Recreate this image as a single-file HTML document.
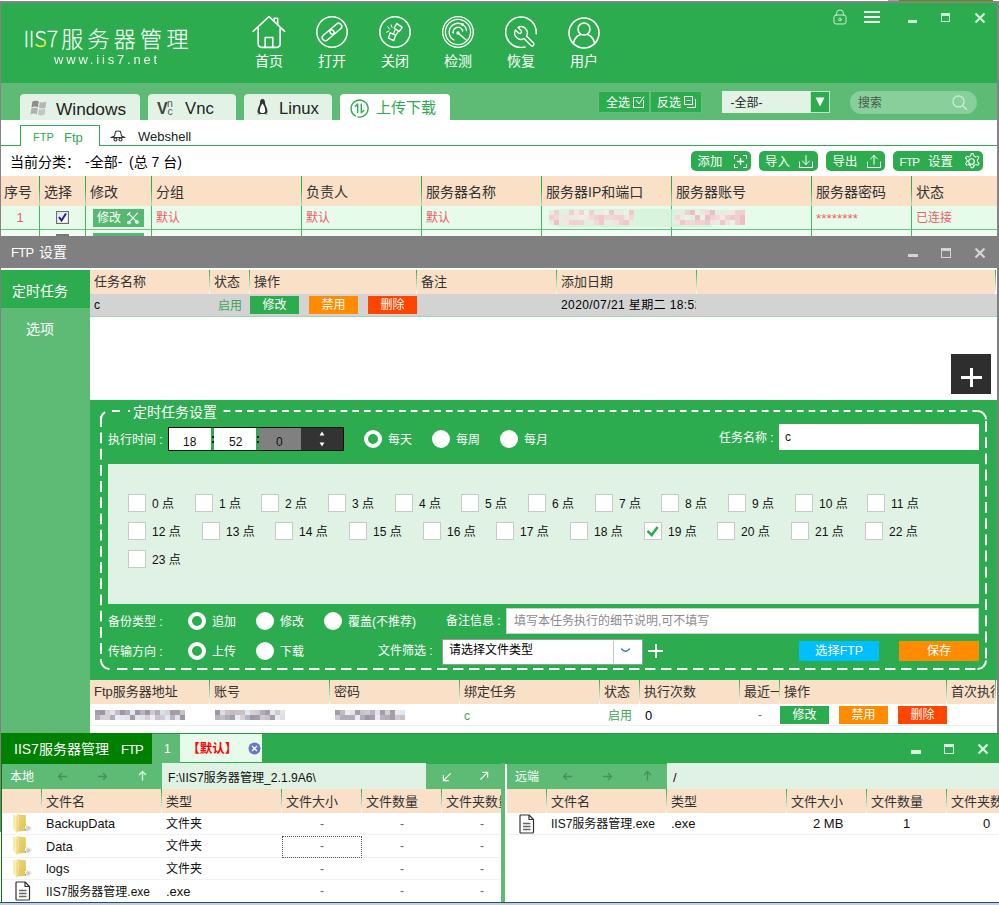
<!DOCTYPE html><html lang="zh"><head><meta charset="utf-8"><title>IIS7服务器管理</title><style>
*{box-sizing:border-box;margin:0;padding:0}
html,body{width:999px;height:905px;overflow:hidden;background:#fff}
body{position:relative;font-family:"Liberation Sans","Noto Sans CJK SC",sans-serif;font-size:13px;color:#111}
.a{position:absolute}
.t{position:absolute;white-space:nowrap;line-height:1}
.w{color:#fff}
</style></head><body>
<div class="a" style="left:888px;top:0px;width:11px;height:1px;background:#a8a0a6;"></div>
<div class="a" style="left:899px;top:0px;width:94px;height:1px;background:#4e9a06;"></div>
<div class="a" style="left:0px;top:1px;width:999px;height:2px;background:#8a8088;"></div>
<div class="a" style="left:0px;top:1px;width:1px;height:235px;background:#8a8088;"></div>
<div class="a" style="left:0px;top:236px;width:1px;height:596px;background:#808080;"></div>
<div class="a" style="left:997px;top:1px;width:2px;height:235px;background:#8a8088;"></div>
<div class="a" style="left:997px;top:236px;width:2px;height:497px;background:#808080;"></div>
<div class="a" style="left:1px;top:3px;width:996px;height:80px;background:#2cac4e;"></div>
<div class="a" style="left:1px;top:83px;width:996px;height:37px;background:#5dbb76;"></div>
<div class="t w" style="left:23.5px;top:26px;font-size:22px;font-family:'Noto Sans CJK SC',sans-serif;font-weight:100;-webkit-text-stroke:0.35px #fff;letter-spacing:-.3px" id="logo1">II<span style="background:linear-gradient(#fff 58%,#e4f53a 58%);-webkit-background-clip:text;background-clip:text;color:transparent;-webkit-text-stroke:0.35px transparent;font-weight:300">S</span>7</div>
<div class="t w" style="left:61.2px;top:26px;font-size:22px;font-family:'Noto Sans CJK SC',sans-serif;font-weight:100;-webkit-text-stroke:0.35px #fff;letter-spacing:4.3px" id="logo">服务器管理</div>
<div class="t w" style="left:54px;top:52.5px;font-size:13px;letter-spacing:2.8px;opacity:.9" id="url">www.iis7.net</div>
<svg class="a" style="left:252px;top:14.7px;" width="34" height="34" viewBox="0 0 32 32" fill="none" stroke="#fff" stroke-width="1.6" stroke-linecap="round" stroke-linejoin="round"><g transform="scale(0.94,0.93) translate(0.2 0.3)"><path d="M1 16.2 L16.8 1.2 L32.5 16.2"/><path d="M6 13 V28.5 Q6 32.5 10 32.5 H24 Q28 32.5 28 28.5 V13"/><path d="M13 32.5 V22.5 H20.6 V32.5"/><path d="M22 6 V3 H25.5 V9.5"/></g></svg>
<div class="t w" style="left:239px;width:60px;text-align:center;top:54px;font-size:14px">首页</div>
<svg class="a" style="left:316px;top:16px;" width="32" height="32" viewBox="0 0 32 32" fill="none" stroke="#fff" stroke-width="1.6" stroke-linecap="round" stroke-linejoin="round"><circle cx="16" cy="16" r="15.2"/><g transform="rotate(-40 16 16)" stroke-width="1.5"><rect x="4.2" y="12.9" width="13.6" height="6.2" rx="3.1"/><rect x="14.2" y="12.9" width="13.6" height="6.2" rx="3.1"/></g></svg>
<div class="t w" style="left:302px;width:60px;text-align:center;top:54px;font-size:14px">打开</div>
<svg class="a" style="left:379px;top:16px;" width="32" height="32" viewBox="0 0 32 32" fill="none" stroke="#fff" stroke-width="1.6" stroke-linecap="round" stroke-linejoin="round"><circle cx="16" cy="16" r="15.2"/><g stroke-width="1.4"><path d="M17.8 7.6 L23.2 11.4 L20.2 15.6 L15.2 12 Z"/><path d="M11.2 16.8 L16.6 19.2 L14.8 24.6 L9.4 22.2 Z"/><path d="M16.2 13.5 L14.6 17.6 M19.5 15 L17.2 18.8" stroke-width="1.1"/></g><path d="M8.8 10.8 L10.6 13.2 M12.2 9 L13 11.4 M7.6 16.2 L10 15" stroke-width="1"/></svg>
<div class="t w" style="left:365px;width:60px;text-align:center;top:54px;font-size:14px">关闭</div>
<svg class="a" style="left:442px;top:16px;" width="32" height="32" viewBox="0 0 32 32" fill="none" stroke="#fff" stroke-width="1.6" stroke-linecap="round" stroke-linejoin="round"><circle cx="16" cy="16" r="15.3" stroke-width="1.3"/><circle cx="16" cy="16" r="12.6" stroke-width="1.3"/><path d="M12 24 A8.8 8.8 0 1 1 24.6 14.5" stroke-width="1.3"/><path d="M11.3 17 A4.8 4.8 0 0 1 20.7 15" stroke-width="1.3"/><circle cx="16" cy="17" r="1.7" fill="#fff" stroke="none"/><path d="M16 17 L24 23.8" stroke-width="1.4"/><circle cx="20.5" cy="8.6" r="1.4" fill="#fff" stroke="none"/><circle cx="11" cy="16.3" r=".9" fill="#fff" stroke="none"/></svg>
<div class="t w" style="left:428px;width:60px;text-align:center;top:54px;font-size:14px">检测</div>
<svg class="a" style="left:505px;top:16px;" width="32" height="32" viewBox="0 0 32 32" fill="none" stroke="#fff" stroke-width="1.6" stroke-linecap="round" stroke-linejoin="round"><path d="M20 31 A15.3 15.3 0 1 1 31.2 17.8"/><path d="M13 11.46 A6.3 6.3 0 0 1 21.54 20 L28.47 26.93 A1.8 1.8 0 0 1 25.93 29.47 L19 22.54 A6.3 6.3 0 0 1 10.46 14 L13.5 17.04 A1.8 1.8 0 0 0 16.04 14.5 Z" stroke-width="1.4"/></svg>
<div class="t w" style="left:491px;width:60px;text-align:center;top:54px;font-size:14px">恢复</div>
<svg class="a" style="left:568px;top:17px;" width="32" height="32" viewBox="0 0 32 32" fill="none" stroke="#fff" stroke-width="1.6" stroke-linecap="round" stroke-linejoin="round"><circle cx="16" cy="16" r="15"/><circle cx="16" cy="12" r="6"/><path d="M5.5 26.5 A11 11 0 0 1 12.5 17.5 M19.5 17.5 A11 11 0 0 1 26.5 26.5"/></svg>
<div class="t w" style="left:554px;width:60px;text-align:center;top:54px;font-size:14px">用户</div>
<svg class="a" style="left:833px;top:9px;stroke-width:1;stroke:#c8ecd1" width="14" height="16" viewBox="0 0 14 16" fill="none" stroke="#fff" stroke-width="1.6" stroke-linecap="round" stroke-linejoin="round"><rect x="1" y="6" width="12" height="9" rx="2"/><path d="M3.5 6 V4.5 A3.5 3.5 0 0 1 10.5 4.5 V6"/><circle cx="7" cy="10.5" r="1.4"/></svg>
<div class="a" style="left:864px;top:11.2px;width:16px;height:1.6px;background:#eaf7ed;"></div>
<div class="a" style="left:864px;top:16.1px;width:16px;height:1.6px;background:#eaf7ed;"></div>
<div class="a" style="left:864px;top:21px;width:16px;height:1.6px;background:#eaf7ed;"></div>
<div class="a" style="left:908px;top:20px;width:9px;height:3px;background:#cfeed8;"></div>
<div class="a" style="left:941px;top:13px;width:9px;height:9px;border:1px solid #cfeed8;border-top-width:3px"></div>
<svg class="a" style="left:974px;top:12px;" width="12" height="12" viewBox="0 0 12 12" fill="none" stroke="#fff" stroke-width="1.6" stroke-linecap="round" stroke-linejoin="round"><path d="M1.5 1.5 L10.5 10.5 M10.5 1.5 L1.5 10.5" stroke="#cfeed8" stroke-width="2.2" stroke-linecap="butt"/></svg>
<div class="a" style="left:20px;top:94px;width:120px;height:26px;background:#e2f3e6;border-radius:4px 4px 0 0"></div>
<div class="a" style="left:148px;top:94px;width:88px;height:26px;background:#e2f3e6;border-radius:4px 4px 0 0"></div>
<div class="a" style="left:244px;top:94px;width:88px;height:26px;background:#e2f3e6;border-radius:4px 4px 0 0"></div>
<div class="a" style="left:340px;top:94px;width:110px;height:26px;background:#fff;border-radius:4px 4px 0 0"></div>
<svg class="a" style="left:27px;top:98px" width="21" height="20" viewBox="0 0 18 17"><g fill="#8e8e8e" transform="skewX(-8) translate(2 0)"><path d="M3 3 Q6 1.5 8.5 3 V8 Q6 6.5 3 8Z"/><path d="M9.5 3.3 Q12 4.5 15 3 V8 Q12 9.5 9.5 8.3Z" fill="#b5b5b5"/><path d="M3 9 Q6 7.5 8.5 9 V14 Q6 12.5 3 14Z" fill="#b0b0b0"/><path d="M9.5 9.3 Q12 10.5 15 9 V14 Q12 15.5 9.5 14.3Z" fill="#c4c4c4"/></g></svg>
<div class="t " style="left:56px;top:101px;font-size:17.3px;color:#222;">Windows</div>
<div class="t" style="left:157px;top:101px;font-size:16px;font-weight:bold;color:#444">V</div>
<div class="t" style="left:166.5px;top:100px;font-size:10.5px;color:#555;line-height:7.5px;width:7px;text-align:center">n<br>c</div>
<div class="t " style="left:185px;top:101px;font-size:16.7px;color:#222;">Vnc</div>
<svg class="a" style="left:256px;top:98px" width="13" height="18" viewBox="0 0 13 18"><path d="M6.5 1 C4.5 1 4 3 4 5 C4 7 1.5 10 1.5 13.5 C1.5 15 2.5 16 3.5 16 H9.5 C10.5 16 11.5 15 11.5 13.5 C11.5 10 9 7 9 5 C9 3 8.5 1 6.5 1Z" fill="#333"/><path d="M6.5 5.5 C5 7 3.8 10 3.8 13 C3.8 14.5 5 15 6.5 15 C8 15 9.2 14.5 9.2 13 C9.2 10 8 7 6.5 5.5Z" fill="#fff"/><path d="M0.5 16.5 Q2.5 14.5 4.5 16.8 Z M12.5 16.5 Q10.5 14.5 8.5 16.8Z" fill="#aaa"/></svg>
<div class="t " style="left:279px;top:101px;font-size:16.7px;color:#222;">Linux</div>
<svg class="a" style="left:349.5px;top:98.5px" width="19" height="19" viewBox="0 0 19 19" fill="none" stroke="#2cac4e" stroke-width="1.4" stroke-linecap="round" stroke-linejoin="round"><path d="M5.5 17 A8.5 8.5 0 1 1 8 17.9"/><path d="M7.7 13.5 V5 L5.3 7.4 M11.3 5.2 V13.8 L13.7 11.4"/></svg>
<div class="t " style="left:376px;top:100px;font-size:15px;color:#2cac4e;">上传下载</div>
<div class="a" style="left:598px;top:91px;width:52px;height:22px;background:#2cac4e;border:1px solid #62c07c"></div>
<div class="a" style="left:650px;top:91px;width:52px;height:22px;background:#2cac4e;border:1px solid #62c07c"></div>
<div class="t " style="left:606px;top:96.8px;font-size:12px;color:#fff;">全选</div>
<div class="t " style="left:657px;top:96.8px;font-size:12px;color:#fff;">反选</div>
<svg class="a" style="left:632px;top:95px" width="14" height="14" viewBox="0 0 14 14" fill="none" stroke="#fff" stroke-width="1"><path d="M11.5 5 V12.5 H1.5 V2.5 H9"/><path d="M4 5 L7 9 L12 1.5"/></svg>
<svg class="a" style="left:683px;top:95px" width="14" height="14" viewBox="0 0 14 14" fill="none" stroke="#fff" stroke-width="1"><path d="M1.5 1.5 H9.5 V9.5 H1.5Z"/><path d="M12.5 4 V12.5 H4"/><path d="M3.5 5.5 H7.5" /></svg>
<div class="a" style="left:722px;top:91px;width:88px;height:22px;background:#e2f3e6;"></div>
<div class="a" style="left:810px;top:91px;width:20px;height:22px;background:#2cac4e;border:1px solid #bfe6c9"></div>
<svg class="a" style="left:814px;top:96px" width="12" height="12" viewBox="0 0 12 12"><path d="M1.5 1.5 H10.5 L6 10.5Z" fill="#fff"/></svg>
<div class="t " style="left:730.5px;top:96.8px;font-size:12px;color:#222;">-全部-</div>
<div class="a" style="left:850px;top:91px;width:127px;height:23px;background:#89cf9b;border-radius:12px"></div>
<div class="t " style="left:858px;top:96.8px;font-size:12px;color:#4a5a4e;">搜索</div>
<svg class="a" style="left:951px;top:94px" width="18" height="18" viewBox="0 0 18 18" fill="none" stroke="#c7ecd1" stroke-width="1.4" stroke-linecap="round"><circle cx="7.5" cy="7.5" r="5.5"/><path d="M11.8 11.8 L15.5 15.5"/></svg>
<div class="a" style="left:1px;top:145px;width:996px;height:1px;background:#2cac4e;"></div>
<div class="a" style="left:20px;top:125px;width:80px;height:21px;background:#fff;border:1px solid #2cac4e;border-bottom:none"></div>
<div class="t " style="left:33px;top:132px;font-size:11px;color:#2cac4e;">FTP</div>
<div class="t " style="left:64px;top:131px;font-size:13px;color:#2cac4e;">Ftp</div>
<svg class="a" style="left:110px;top:130px" width="16" height="12" viewBox="0 0 16 12" fill="none" stroke="#333" stroke-width="1.1" stroke-linejoin="round"><path d="M1 7.5 L4.5 6 L5.5 1.5 Q8 0.5 10.5 1.5 L11.5 6 L15 7.5 Z"/><circle cx="5.5" cy="9.5" r="1.5"/><circle cx="10.5" cy="9.5" r="1.5"/></svg>
<div class="t " style="left:138px;top:130px;font-size:13px;color:#222;">Webshell</div>
<div class="t " style="left:10px;top:155px;font-size:14px;color:#000;">当前分类：</div>
<div class="t " style="left:85px;top:155px;font-size:14px;color:#000;">-全部-</div>
<div class="t " style="left:129px;top:155px;font-size:14px;color:#000;">(总 7 台)</div>
<div class="a" style="left:690.5px;top:151px;width:60px;height:19.5px;background:#2cac4e;border-radius:5px"></div>
<div class="t " style="left:697.5px;top:156px;font-size:12.4px;color:#fff;">添加</div>
<div class="a" style="left:758.5px;top:151px;width:59.5px;height:19.5px;background:#2cac4e;border-radius:5px"></div>
<div class="t " style="left:765px;top:156px;font-size:12.4px;color:#fff;">导入</div>
<div class="a" style="left:825.5px;top:151px;width:59.5px;height:19.5px;background:#2cac4e;border-radius:5px"></div>
<div class="t " style="left:832.5px;top:156px;font-size:12.4px;color:#fff;">导出</div>
<div class="a" style="left:892.5px;top:151px;width:90px;height:19.5px;background:#2cac4e;border-radius:5px"></div>
<div class="t " style="left:928px;top:156px;font-size:12.4px;color:#fff;">设置</div>
<div class="t " style="left:899.5px;top:156.5px;font-size:11.5px;color:#fff;letter-spacing:-.6px">FTP</div>
<svg class="a" style="left:733px;top:154px" width="15" height="15" viewBox="0 0 15 15" fill="none" stroke="#fff" stroke-width="1" stroke-linecap="round" stroke-linejoin="round"><path d="M1.5 4.5 V1.5 H4.5 M10.5 1.5 H13.5 V4.5 M13.5 10.5 V13.5 H10.5 M4.5 13.5 H1.5 V10.5" /><path d="M7.5 4.5 V10.5 M4.5 7.5 H10.5" stroke-width="1.5"/></svg>
<svg class="a" style="left:798px;top:154px" width="16" height="15" viewBox="0 0 16 15" fill="none" stroke="#fff" stroke-width="1" stroke-linecap="round" stroke-linejoin="round"><path d="M1.5 8 V13.5 H14.5 V8"/><path d="M8 1.5 V10.5 M4.5 7 L8 10.5 L11.5 7"/></svg>
<svg class="a" style="left:866px;top:154px" width="16" height="15" viewBox="0 0 16 15" fill="none" stroke="#fff" stroke-width="1" stroke-linecap="round" stroke-linejoin="round"><path d="M1.5 8 V13.5 H14.5 V8"/><path d="M8 10.5 V1.5 M4.5 5 L8 1.5 L11.5 5"/></svg>
<svg class="a" style="left:961.5px;top:152px" width="19" height="19" viewBox="0 0 17 17" fill="none" stroke="#fff" stroke-width="1" stroke-linecap="round" stroke-linejoin="round"><circle cx="8.5" cy="8.5" r="2.5"/><path d="M8.5 1.5 l1.6 0 l.6 2 l1.6 .9 l2 -.6 l.9 1.5 l-1.4 1.6 v1.8 l1.4 1.6 l-.9 1.5 l-2 -.6 l-1.6 .9 l-.6 2 h-1.8 l-.6 -2 l-1.6 -.9 l-2 .6 l-.9 -1.5 l1.4 -1.6 v-1.8 l-1.4 -1.6 l.9 -1.5 l2 .6 l1.6 -.9 l.6 -2Z" stroke-dasharray="2.2 1.2"/></svg>
<div class="a" style="left:1px;top:176px;width:996px;height:30px;background:#f9e0c7;"></div>
<div class="a" style="left:1px;top:206px;width:996px;height:23px;background:#e6fbe9;"></div>
<div class="a" style="left:1px;top:229px;width:996px;height:1px;background:#6cc583;"></div>
<div class="a" style="left:1px;top:230px;width:996px;height:6px;background:#f0fdf2;"></div>
<div class="a" style="left:39px;top:176px;width:1px;height:30px;background:linear-gradient(#2cac4e 40%,#a9dfb6);"></div>
<div class="a" style="left:39px;top:206px;width:1px;height:30px;background:#49b665;"></div>
<div class="a" style="left:85px;top:176px;width:1px;height:30px;background:linear-gradient(#2cac4e 40%,#a9dfb6);"></div>
<div class="a" style="left:85px;top:206px;width:1px;height:30px;background:#49b665;"></div>
<div class="a" style="left:151px;top:176px;width:1px;height:30px;background:linear-gradient(#2cac4e 40%,#a9dfb6);"></div>
<div class="a" style="left:151px;top:206px;width:1px;height:30px;background:#49b665;"></div>
<div class="a" style="left:301px;top:176px;width:1px;height:30px;background:linear-gradient(#2cac4e 40%,#a9dfb6);"></div>
<div class="a" style="left:301px;top:206px;width:1px;height:30px;background:#49b665;"></div>
<div class="a" style="left:421px;top:176px;width:1px;height:30px;background:linear-gradient(#2cac4e 40%,#a9dfb6);"></div>
<div class="a" style="left:421px;top:206px;width:1px;height:30px;background:#49b665;"></div>
<div class="a" style="left:541px;top:176px;width:1px;height:30px;background:linear-gradient(#2cac4e 40%,#a9dfb6);"></div>
<div class="a" style="left:541px;top:206px;width:1px;height:30px;background:#49b665;"></div>
<div class="a" style="left:671px;top:176px;width:1px;height:30px;background:linear-gradient(#2cac4e 40%,#a9dfb6);"></div>
<div class="a" style="left:671px;top:206px;width:1px;height:30px;background:#49b665;"></div>
<div class="a" style="left:811px;top:176px;width:1px;height:30px;background:linear-gradient(#2cac4e 40%,#a9dfb6);"></div>
<div class="a" style="left:811px;top:206px;width:1px;height:30px;background:#49b665;"></div>
<div class="a" style="left:911px;top:176px;width:1px;height:30px;background:linear-gradient(#2cac4e 40%,#a9dfb6);"></div>
<div class="a" style="left:911px;top:206px;width:1px;height:30px;background:#49b665;"></div>
<div class="t " style="left:4px;top:185px;font-size:14px;color:#333;">序号</div>
<div class="t " style="left:44px;top:185px;font-size:14px;color:#333;">选择</div>
<div class="t " style="left:90px;top:185px;font-size:14px;color:#333;">修改</div>
<div class="t " style="left:156px;top:185px;font-size:14px;color:#333;">分组</div>
<div class="t " style="left:306px;top:185px;font-size:14px;color:#333;">负责人</div>
<div class="t " style="left:426px;top:185px;font-size:14px;color:#333;">服务器名称</div>
<div class="t " style="left:546px;top:185px;font-size:14px;color:#333;">服务器IP和端口</div>
<div class="t " style="left:676px;top:185px;font-size:14px;color:#333;">服务器账号</div>
<div class="t " style="left:816px;top:185px;font-size:14px;color:#333;">服务器密码</div>
<div class="t " style="left:916px;top:185px;font-size:14px;color:#333;">状态</div>
<div class="t " style="left:16.5px;top:211px;font-size:13px;color:#f05d69;">1</div>
<div class="t " style="left:156px;top:212px;font-size:12px;color:#f05d69;">默认</div>
<div class="t " style="left:306px;top:212px;font-size:12px;color:#f05d69;">默认</div>
<div class="t " style="left:426px;top:212px;font-size:12px;color:#f05d69;">默认</div>
<div class="t " style="left:916px;top:212px;font-size:12px;color:#f05d69;">已连接</div>
<div class="t " style="left:816px;top:212px;font-size:13.5px;color:#f05d69;">********</div>
<div class="a" style="left:56px;top:211px;width:13px;height:13px;background:linear-gradient(135deg,#d8d8e2,#fff 70%);border:1px solid #6b6b7a;box-shadow:inset 0 0 0 1px #e4e4ec"></div>
<svg class="a" style="left:57px;top:212px" width="11" height="11" viewBox="0 0 11 11" fill="none" stroke="#22228a" stroke-width="2"><path d="M2 5 L4.5 8.5 L9 1.5"/></svg>
<div class="a" style="left:56px;top:234px;width:13px;height:2px;background:#777;"></div>
<div class="a" style="left:93px;top:209px;width:51px;height:18px;background:#56b971;"></div>
<div class="t " style="left:97px;top:212px;font-size:12px;color:#fff;">修改</div>
<svg class="a" style="left:126px;top:211px" width="14" height="14" viewBox="0 0 14 14" fill="none" stroke="#fff" stroke-width="1.1" stroke-linecap="round"><path d="M2.5 2.5 L11 11"/><path d="M11.5 2 L3 11.5"/><circle cx="3" cy="11.5" r="1.3"/><circle cx="11" cy="11" r="1.3"/><path d="M1.5 4 L4 1.5"/></svg>
<div class="a" style="left:93px;top:233px;width:51px;height:3px;background:#56b971;"></div>
<div class="a" style="left:552px;top:209px;width:160px;height:18px;background:#d5f3da;border-radius:8px 0 0 8px;opacity:.8"></div>
<svg class="a" style="left:549px;top:210px;filter:blur(.7px)" width="85" height="15" viewBox="0 0 85 15"><rect x="0" y="0" width="5" height="5" fill="#e2f0e2"/><rect x="5" y="0" width="5" height="5" fill="#efd0d0"/><rect x="10" y="0" width="5" height="5" fill="#e2f0e2"/><rect x="15" y="0" width="5" height="5" fill="#e2f0e2"/><rect x="20" y="0" width="5" height="5" fill="#efd0d0"/><rect x="25" y="0" width="5" height="5" fill="#f5e6e4"/><rect x="30" y="0" width="5" height="5" fill="#f0d2d4"/><rect x="35" y="0" width="5" height="5" fill="#e9f3e6"/><rect x="40" y="0" width="5" height="5" fill="#efd0d0"/><rect x="45" y="0" width="5" height="5" fill="#e2f0e2"/><rect x="50" y="0" width="5" height="5" fill="#f5e6e4"/><rect x="55" y="0" width="5" height="5" fill="#e9f3e6"/><rect x="60" y="0" width="5" height="5" fill="#edc9cc"/><rect x="65" y="0" width="5" height="5" fill="#e2f0e2"/><rect x="70" y="0" width="5" height="5" fill="#e6ecdf"/><rect x="75" y="0" width="5" height="5" fill="#e9f3e6"/><rect x="80" y="0" width="5" height="5" fill="#edc9cc"/><rect x="0" y="5" width="5" height="5" fill="#efd0d0"/><rect x="5" y="5" width="5" height="5" fill="#f2d9d9"/><rect x="10" y="5" width="5" height="5" fill="#f5e6e4"/><rect x="15" y="5" width="5" height="5" fill="#f3e2e0"/><rect x="20" y="5" width="5" height="5" fill="#e2f0e2"/><rect x="25" y="5" width="5" height="5" fill="#f5e6e4"/><rect x="30" y="5" width="5" height="5" fill="#e9f3e6"/><rect x="35" y="5" width="5" height="5" fill="#f5e6e4"/><rect x="40" y="5" width="5" height="5" fill="#f2d9d9"/><rect x="45" y="5" width="5" height="5" fill="#efd0d0"/><rect x="50" y="5" width="5" height="5" fill="#edc9cc"/><rect x="55" y="5" width="5" height="5" fill="#f2d9d9"/><rect x="60" y="5" width="5" height="5" fill="#f2d9d9"/><rect x="65" y="5" width="5" height="5" fill="#f0d2d4"/><rect x="70" y="5" width="5" height="5" fill="#f0d2d4"/><rect x="75" y="5" width="5" height="5" fill="#f5e6e4"/><rect x="80" y="5" width="5" height="5" fill="#f2d9d9"/><rect x="0" y="10" width="5" height="5" fill="#e2f0e2"/><rect x="5" y="10" width="5" height="5" fill="#ebbfc6"/><rect x="10" y="10" width="5" height="5" fill="#e2f0e2"/><rect x="15" y="10" width="5" height="5" fill="#f5e6e4"/><rect x="20" y="10" width="5" height="5" fill="#f0d2d4"/><rect x="25" y="10" width="5" height="5" fill="#efd0d0"/><rect x="30" y="10" width="5" height="5" fill="#f0d2d4"/><rect x="35" y="10" width="5" height="5" fill="#e6ecdf"/><rect x="40" y="10" width="5" height="5" fill="#e2f0e2"/><rect x="45" y="10" width="5" height="5" fill="#f2d9d9"/><rect x="50" y="10" width="5" height="5" fill="#edc9cc"/><rect x="55" y="10" width="5" height="5" fill="#e2f0e2"/><rect x="60" y="10" width="5" height="5" fill="#e6ecdf"/><rect x="65" y="10" width="5" height="5" fill="#f3e2e0"/><rect x="70" y="10" width="5" height="5" fill="#efd0d0"/><rect x="75" y="10" width="5" height="5" fill="#edc9cc"/><rect x="80" y="10" width="5" height="5" fill="#e6ecdf"/></svg>
<svg class="a" style="left:675px;top:210px;filter:blur(.7px)" width="70" height="15" viewBox="0 0 70 15"><rect x="0" y="0" width="5" height="5" fill="#e2f0e2"/><rect x="5" y="0" width="5" height="5" fill="#e6ecdf"/><rect x="10" y="0" width="5" height="5" fill="#efd0d0"/><rect x="15" y="0" width="5" height="5" fill="#ebbfc6"/><rect x="20" y="0" width="5" height="5" fill="#e9f3e6"/><rect x="25" y="0" width="5" height="5" fill="#f3e2e0"/><rect x="30" y="0" width="5" height="5" fill="#f2d9d9"/><rect x="35" y="0" width="5" height="5" fill="#ebbfc6"/><rect x="40" y="0" width="5" height="5" fill="#e2f0e2"/><rect x="45" y="0" width="5" height="5" fill="#e6ecdf"/><rect x="50" y="0" width="5" height="5" fill="#e2f0e2"/><rect x="55" y="0" width="5" height="5" fill="#f5e6e4"/><rect x="60" y="0" width="5" height="5" fill="#f0d2d4"/><rect x="65" y="0" width="5" height="5" fill="#efd0d0"/><rect x="0" y="5" width="5" height="5" fill="#f2d9d9"/><rect x="5" y="5" width="5" height="5" fill="#f5e6e4"/><rect x="10" y="5" width="5" height="5" fill="#e9f3e6"/><rect x="15" y="5" width="5" height="5" fill="#e2f0e2"/><rect x="20" y="5" width="5" height="5" fill="#ebbfc6"/><rect x="25" y="5" width="5" height="5" fill="#e9f3e6"/><rect x="30" y="5" width="5" height="5" fill="#ebbfc6"/><rect x="35" y="5" width="5" height="5" fill="#f0d2d4"/><rect x="40" y="5" width="5" height="5" fill="#f2d9d9"/><rect x="45" y="5" width="5" height="5" fill="#f5e6e4"/><rect x="50" y="5" width="5" height="5" fill="#f0d2d4"/><rect x="55" y="5" width="5" height="5" fill="#edc9cc"/><rect x="60" y="5" width="5" height="5" fill="#efd0d0"/><rect x="65" y="5" width="5" height="5" fill="#ebbfc6"/><rect x="0" y="10" width="5" height="5" fill="#f3e2e0"/><rect x="5" y="10" width="5" height="5" fill="#edc9cc"/><rect x="10" y="10" width="5" height="5" fill="#f2d9d9"/><rect x="15" y="10" width="5" height="5" fill="#f2d9d9"/><rect x="20" y="10" width="5" height="5" fill="#efd0d0"/><rect x="25" y="10" width="5" height="5" fill="#f0d2d4"/><rect x="30" y="10" width="5" height="5" fill="#edc9cc"/><rect x="35" y="10" width="5" height="5" fill="#f3e2e0"/><rect x="40" y="10" width="5" height="5" fill="#e2f0e2"/><rect x="45" y="10" width="5" height="5" fill="#edc9cc"/><rect x="50" y="10" width="5" height="5" fill="#f3e2e0"/><rect x="55" y="10" width="5" height="5" fill="#e9f3e6"/><rect x="60" y="10" width="5" height="5" fill="#efd0d0"/><rect x="65" y="10" width="5" height="5" fill="#ebbfc6"/></svg>
<div class="a" style="left:0px;top:236px;width:999px;height:32px;background:#808080;"></div>
<div class="t " style="left:11px;top:245.5px;font-size:13px;color:#fff;letter-spacing:-.7px">FTP</div>
<div class="t " style="left:39px;top:245px;font-size:14px;color:#fff;">设置</div>
<div class="a" style="left:908px;top:254px;width:10px;height:3px;background:#d4d4d4;"></div>
<div class="a" style="left:941px;top:248px;width:10px;height:10px;border:1px solid #d4d4d4;border-top-width:3px"></div>
<svg class="a" style="left:974px;top:247px" width="12" height="12" viewBox="0 0 12 12"><path d="M1.5 1.5 L10.5 10.5 M10.5 1.5 L1.5 10.5" stroke="#d4d4d4" stroke-width="2.2" fill="none"/></svg>
<div class="a" style="left:1px;top:270px;width:89px;height:463px;background:#5dbb76;"></div>
<div class="a" style="left:1px;top:270px;width:89px;height:38px;background:#2cac4e;"></div>
<div class="t " style="left:12px;top:284px;font-size:14px;color:#fff;">定时任务</div>
<div class="t " style="left:26px;top:322px;font-size:14px;color:#fff;">选项</div>
<div class="a" style="left:90px;top:270px;width:907px;height:24px;background:#f9e0c7;"></div>
<div class="a" style="left:90px;top:294px;width:907px;height:21px;background:#d3d3d3;"></div>
<div class="a" style="left:90px;top:315px;width:907px;height:1px;background:#d3d3d3;"></div>
<div class="a" style="left:90px;top:316px;width:907px;height:1px;background:#9ad7a9;"></div>
<div class="a" style="left:209px;top:270px;width:1px;height:24px;background:linear-gradient(#2cac4e,#8fd4a0 45%,#fff);"></div>
<div class="a" style="left:249px;top:270px;width:1px;height:24px;background:linear-gradient(#2cac4e,#8fd4a0 45%,#fff);"></div>
<div class="a" style="left:416px;top:270px;width:1px;height:24px;background:linear-gradient(#2cac4e,#8fd4a0 45%,#fff);"></div>
<div class="a" style="left:556px;top:270px;width:1px;height:24px;background:linear-gradient(#2cac4e,#8fd4a0 45%,#fff);"></div>
<div class="a" style="left:696px;top:270px;width:1px;height:24px;background:linear-gradient(#2cac4e,#8fd4a0 45%,#fff);"></div>
<div class="a" style="left:995px;top:270px;width:1px;height:24px;background:linear-gradient(#2cac4e,#8fd4a0 45%,#fff);"></div>
<div class="a" style="left:996px;top:270px;width:1px;height:24px;background:#fff;"></div>
<div class="t " style="left:94px;top:275.4px;font-size:13px;color:#333;">任务名称</div>
<div class="t " style="left:214px;top:275.4px;font-size:13px;color:#333;">状态</div>
<div class="t " style="left:254px;top:275.4px;font-size:13px;color:#333;">操作</div>
<div class="t " style="left:421px;top:275.4px;font-size:13px;color:#333;">备注</div>
<div class="t " style="left:561px;top:275.4px;font-size:13px;color:#333;">添加日期</div>
<div class="t " style="left:94px;top:299px;font-size:12px;color:#000;">c</div>
<div class="t " style="left:218px;top:299.5px;font-size:12px;color:#3aa655;">启用</div>
<div class="a w" style="left:250px;top:296px;width:49px;height:18px;background:#2cac4e;font-size:12px;line-height:18px;text-align:center">修改</div>
<div class="a w" style="left:309px;top:296px;width:49px;height:18px;background:#ff8c00;font-size:12px;line-height:18px;text-align:center">禁用</div>
<div class="a w" style="left:368px;top:296px;width:49px;height:18px;background:#ff4500;font-size:12px;line-height:18px;text-align:center">删除</div>
<div class="t " style="left:561px;top:298.5px;font-size:12px;color:#000;letter-spacing:.4px;width:135px;overflow:hidden;height:15px;line-height:13px">2020/07/21 星期二 18:52</div>
<div class="a" style="left:951px;top:354px;width:40px;height:40px;background:#2e2e2e;"></div>
<div class="a" style="left:960.5px;top:376px;width:21px;height:3px;background:#fff;"></div>
<div class="a" style="left:969.5px;top:368px;width:3px;height:19px;background:#fff;"></div>
<div class="a" style="left:90px;top:400px;width:907px;height:280px;background:#2cac4e;"></div>
<svg class="a" style="left:0;top:0" width="999" height="905" viewBox="0 0 999 905" fill="none" stroke="#fff" stroke-width="2"><path d="M105.2 412.2 A8.5 8.5 0 0 0 101 419.5 M101 660.5 A8.5 8.5 0 0 0 109.5 669 M977.5 669 A8.5 8.5 0 0 0 986 660.5 M986 419.5 A8.5 8.5 0 0 0 977.5 411"/><path d="M101 416.3 V660.5" stroke-dasharray="10.8 5.4"/><path d="M986 421 V660.5" stroke-dasharray="10.8 5.4"/><path d="M117 669 H977.5" stroke-dasharray="10.4 5.6"/><path d="M223.6 411 H977.5" stroke-dasharray="6.7 5"/></svg>
<div class="a" style="left:122px;top:405px;width:100px;height:12px;background:#2cac4e;"></div>
<div class="t " style="left:133px;top:405px;font-size:14px;color:#fff;">定时任务设置</div>
<div class="a" style="left:112px;top:410px;width:8px;height:2px;background:#fff;"></div>
<div class="a" style="left:128px;top:410px;width:2px;height:2px;background:#fff;"></div>
<div class="t " style="left:108px;top:434px;font-size:12px;color:#fff;">执行时间 :</div>
<div class="a" style="left:168px;top:427px;width:176px;height:24px;background:#111;"></div>
<div class="a" style="left:169px;top:428px;width:42px;height:22px;background:#fff;"></div>
<div class="a" style="left:211px;top:428px;width:3px;height:22px;background:#2cac4e;"></div>
<div class="a" style="left:214px;top:428px;width:42px;height:22px;background:#fff;"></div>
<div class="a" style="left:256px;top:428px;width:3px;height:22px;background:#2cac4e;"></div>
<div class="a" style="left:259px;top:428px;width:42px;height:22px;background:#808080;"></div>
<div class="a" style="left:301px;top:428px;width:42px;height:22px;background:#333;"></div>
<div class="a" style="left:211.5px;top:436px;width:2px;height:2px;background:#1a1a1a;"></div>
<div class="a" style="left:211.5px;top:441px;width:2px;height:2px;background:#1a1a1a;"></div>
<div class="a" style="left:256.5px;top:436px;width:2px;height:2px;background:#1a1a1a;"></div>
<div class="a" style="left:256.5px;top:441px;width:2px;height:2px;background:#1a1a1a;"></div>
<div class="t " style="left:183px;top:436px;font-size:12px;color:#111;">18</div>
<div class="t " style="left:229px;top:436px;font-size:12px;color:#111;">52</div>
<div class="t " style="left:276px;top:436px;font-size:12px;color:#111;">0</div>
<svg class="a" style="left:318px;top:430px" width="8" height="18" viewBox="0 0 8 18" fill="#fff"><path d="M4 1.5 L6.4 5.5 H1.6Z M4 16.5 L6.4 12.5 H1.6Z"/></svg>
<div class="a" style="left:364px;top:430px;width:18px;height:18px;border-radius:50%;background:#2cac4e;border:4.2px solid #fff"></div>
<div class="t " style="left:388px;top:433.5px;font-size:12px;color:#fff;">每天</div>
<div class="a" style="left:432px;top:430px;width:18px;height:18px;border-radius:50%;background:#fff"></div>
<div class="t " style="left:456px;top:433.5px;font-size:12px;color:#fff;">每周</div>
<div class="a" style="left:500px;top:430px;width:18px;height:18px;border-radius:50%;background:#fff"></div>
<div class="t " style="left:524px;top:433.5px;font-size:12px;color:#fff;">每月</div>
<div class="t " style="left:719px;top:432px;font-size:12px;color:#fff;">任务名称 :</div>
<div class="a" style="left:779px;top:424px;width:200px;height:26px;background:#fff;"></div>
<div class="t " style="left:785px;top:431px;font-size:12px;color:#111;">c</div>
<div class="a" style="left:108px;top:464px;width:871px;height:139.6px;background:#dff2e3;"></div>
<div class="a" style="left:128px;top:494px;width:18px;height:18px;background:#fff;border:1px solid #c9c9c9"></div>
<div class="t " style="left:152px;top:497.7px;font-size:12px;color:#111;">0 点</div>
<div class="a" style="left:195px;top:494px;width:18px;height:18px;background:#fff;border:1px solid #c9c9c9"></div>
<div class="t " style="left:219px;top:497.7px;font-size:12px;color:#111;">1 点</div>
<div class="a" style="left:261px;top:494px;width:18px;height:18px;background:#fff;border:1px solid #c9c9c9"></div>
<div class="t " style="left:285px;top:497.7px;font-size:12px;color:#111;">2 点</div>
<div class="a" style="left:328px;top:494px;width:18px;height:18px;background:#fff;border:1px solid #c9c9c9"></div>
<div class="t " style="left:352px;top:497.7px;font-size:12px;color:#111;">3 点</div>
<div class="a" style="left:395px;top:494px;width:18px;height:18px;background:#fff;border:1px solid #c9c9c9"></div>
<div class="t " style="left:419px;top:497.7px;font-size:12px;color:#111;">4 点</div>
<div class="a" style="left:461px;top:494px;width:18px;height:18px;background:#fff;border:1px solid #c9c9c9"></div>
<div class="t " style="left:485px;top:497.7px;font-size:12px;color:#111;">5 点</div>
<div class="a" style="left:528px;top:494px;width:18px;height:18px;background:#fff;border:1px solid #c9c9c9"></div>
<div class="t " style="left:552px;top:497.7px;font-size:12px;color:#111;">6 点</div>
<div class="a" style="left:595px;top:494px;width:18px;height:18px;background:#fff;border:1px solid #c9c9c9"></div>
<div class="t " style="left:619px;top:497.7px;font-size:12px;color:#111;">7 点</div>
<div class="a" style="left:661px;top:494px;width:18px;height:18px;background:#fff;border:1px solid #c9c9c9"></div>
<div class="t " style="left:685px;top:497.7px;font-size:12px;color:#111;">8 点</div>
<div class="a" style="left:728px;top:494px;width:18px;height:18px;background:#fff;border:1px solid #c9c9c9"></div>
<div class="t " style="left:752px;top:497.7px;font-size:12px;color:#111;">9 点</div>
<div class="a" style="left:795px;top:494px;width:18px;height:18px;background:#fff;border:1px solid #c9c9c9"></div>
<div class="t " style="left:819px;top:497.7px;font-size:12px;color:#111;">10 点</div>
<div class="a" style="left:867px;top:494px;width:18px;height:18px;background:#fff;border:1px solid #c9c9c9"></div>
<div class="t " style="left:891px;top:497.7px;font-size:12px;color:#111;">11 点</div>
<div class="a" style="left:128px;top:522px;width:18px;height:18px;background:#fff;border:1px solid #c9c9c9"></div>
<div class="t " style="left:152px;top:525.7px;font-size:12px;color:#111;">12 点</div>
<div class="a" style="left:202px;top:522px;width:18px;height:18px;background:#fff;border:1px solid #c9c9c9"></div>
<div class="t " style="left:226px;top:525.7px;font-size:12px;color:#111;">13 点</div>
<div class="a" style="left:275px;top:522px;width:18px;height:18px;background:#fff;border:1px solid #c9c9c9"></div>
<div class="t " style="left:299px;top:525.7px;font-size:12px;color:#111;">14 点</div>
<div class="a" style="left:349px;top:522px;width:18px;height:18px;background:#fff;border:1px solid #c9c9c9"></div>
<div class="t " style="left:373px;top:525.7px;font-size:12px;color:#111;">15 点</div>
<div class="a" style="left:423px;top:522px;width:18px;height:18px;background:#fff;border:1px solid #c9c9c9"></div>
<div class="t " style="left:447px;top:525.7px;font-size:12px;color:#111;">16 点</div>
<div class="a" style="left:496px;top:522px;width:18px;height:18px;background:#fff;border:1px solid #c9c9c9"></div>
<div class="t " style="left:520px;top:525.7px;font-size:12px;color:#111;">17 点</div>
<div class="a" style="left:570px;top:522px;width:18px;height:18px;background:#fff;border:1px solid #c9c9c9"></div>
<div class="t " style="left:594px;top:525.7px;font-size:12px;color:#111;">18 点</div>
<div class="a" style="left:644px;top:522px;width:18px;height:18px;background:#fff;border:1px solid #c9c9c9"></div>
<svg class="a" style="left:647px;top:525px" width="12" height="12" viewBox="0 0 12 12" fill="none" stroke="#2cac4e" stroke-width="2.6"><path d="M.4 5.9 L4.7 10 L10.6 1.9"/></svg>
<div class="t " style="left:668px;top:525.7px;font-size:12px;color:#111;">19 点</div>
<div class="a" style="left:717px;top:522px;width:18px;height:18px;background:#fff;border:1px solid #c9c9c9"></div>
<div class="t " style="left:741px;top:525.7px;font-size:12px;color:#111;">20 点</div>
<div class="a" style="left:791px;top:522px;width:18px;height:18px;background:#fff;border:1px solid #c9c9c9"></div>
<div class="t " style="left:815px;top:525.7px;font-size:12px;color:#111;">21 点</div>
<div class="a" style="left:865px;top:522px;width:18px;height:18px;background:#fff;border:1px solid #c9c9c9"></div>
<div class="t " style="left:889px;top:525.7px;font-size:12px;color:#111;">22 点</div>
<div class="a" style="left:128px;top:550px;width:18px;height:18px;background:#fff;border:1px solid #c9c9c9"></div>
<div class="t " style="left:152px;top:553.7px;font-size:12px;color:#111;">23 点</div>
<div class="t " style="left:108px;top:615.5px;font-size:12px;color:#fff;">备份类型 :</div>
<div class="a" style="left:188px;top:612px;width:18px;height:18px;border-radius:50%;background:#2cac4e;border:4.2px solid #fff"></div>
<div class="t " style="left:212px;top:615.5px;font-size:12px;color:#fff;">追加</div>
<div class="a" style="left:256px;top:612px;width:18px;height:18px;border-radius:50%;background:#fff"></div>
<div class="t " style="left:280px;top:615.5px;font-size:12px;color:#fff;">修改</div>
<div class="a" style="left:324px;top:612px;width:18px;height:18px;border-radius:50%;background:#fff"></div>
<div class="t " style="left:348px;top:615.5px;font-size:12px;color:#fff;">覆盖(不推荐)</div>
<div class="t " style="left:446px;top:615px;font-size:12px;color:#fff;">备注信息 :</div>
<div class="a" style="left:506px;top:608px;width:473px;height:26px;background:#fff;border:1px solid #d0d0d0"></div>
<div class="t " style="left:514px;top:615px;font-size:12px;color:#8a8a8a;">填写本任务执行的细节说明,可不填写</div>
<div class="t " style="left:108px;top:645.5px;font-size:12px;color:#fff;">传输方向 :</div>
<div class="a" style="left:188px;top:642px;width:18px;height:18px;border-radius:50%;background:#2cac4e;border:4.2px solid #fff"></div>
<div class="t " style="left:212px;top:645.5px;font-size:12px;color:#fff;">上传</div>
<div class="a" style="left:256px;top:642px;width:18px;height:18px;border-radius:50%;background:#fff"></div>
<div class="t " style="left:280px;top:645.5px;font-size:12px;color:#fff;">下载</div>
<div class="t " style="left:378px;top:645px;font-size:12px;color:#fff;">文件筛选 :</div>
<div class="a" style="left:442px;top:639px;width:201px;height:26px;background:#fff;border:1px solid #9a9a9a"></div>
<div class="a" style="left:613px;top:641px;width:1px;height:22px;background:#c8c8c8;"></div>
<div class="t " style="left:449px;top:644px;font-size:12px;color:#000;">请选择文件类型</div>
<svg class="a" style="left:620px;top:647px" width="11" height="8" viewBox="0 0 11 8" fill="none" stroke="#3b6fe0" stroke-width="1.4" stroke-linecap="round"><path d="M1.5 2 Q5.5 6.5 9.5 2"/></svg>
<div class="a" style="left:648px;top:650px;width:15px;height:2px;background:#fff;"></div>
<div class="a" style="left:654.5px;top:644px;width:2px;height:14px;background:#fff;"></div>
<div class="a w" style="left:799px;top:641px;width:80px;height:20px;background:#00bfff;font-size:12.3px;line-height:21px;text-align:center">选择FTP</div>
<div class="a w" style="left:899px;top:641px;width:80px;height:20px;background:#ff8c00;font-size:12.3px;line-height:21px;text-align:center">保存</div>
<div class="a" style="left:90px;top:680px;width:907px;height:24px;background:#f9e0c7;"></div>
<div class="a" style="left:209px;top:680px;width:1px;height:24px;background:linear-gradient(#2cac4e,#8fd4a0 45%,#fff);"></div>
<div class="a" style="left:329px;top:680px;width:1px;height:24px;background:linear-gradient(#2cac4e,#8fd4a0 45%,#fff);"></div>
<div class="a" style="left:459px;top:680px;width:1px;height:24px;background:linear-gradient(#2cac4e,#8fd4a0 45%,#fff);"></div>
<div class="a" style="left:599px;top:680px;width:1px;height:24px;background:linear-gradient(#2cac4e,#8fd4a0 45%,#fff);"></div>
<div class="a" style="left:639px;top:680px;width:1px;height:24px;background:linear-gradient(#2cac4e,#8fd4a0 45%,#fff);"></div>
<div class="a" style="left:739px;top:680px;width:1px;height:24px;background:linear-gradient(#2cac4e,#8fd4a0 45%,#fff);"></div>
<div class="a" style="left:779px;top:680px;width:1px;height:24px;background:linear-gradient(#2cac4e,#8fd4a0 45%,#fff);"></div>
<div class="a" style="left:946px;top:680px;width:1px;height:24px;background:linear-gradient(#2cac4e,#8fd4a0 45%,#fff);"></div>
<div class="a" style="left:995px;top:680px;width:1px;height:24px;background:linear-gradient(#2cac4e,#8fd4a0 45%,#fff);"></div>
<div class="a" style="left:996px;top:680px;width:1px;height:24px;background:#fff;"></div>
<div class="t " style="left:94px;top:685.4px;font-size:13px;color:#333;width:110px;overflow:hidden;height:16px;line-height:14px">Ftp服务器地址</div>
<div class="t " style="left:214px;top:685.4px;font-size:13px;color:#333;width:110px;overflow:hidden;height:16px;line-height:14px">账号</div>
<div class="t " style="left:334px;top:685.4px;font-size:13px;color:#333;width:110px;overflow:hidden;height:16px;line-height:14px">密码</div>
<div class="t " style="left:464px;top:685.4px;font-size:13px;color:#333;width:110px;overflow:hidden;height:16px;line-height:14px">绑定任务</div>
<div class="t " style="left:604px;top:685.4px;font-size:13px;color:#333;width:34px;overflow:hidden;height:16px;line-height:14px">状态</div>
<div class="t " style="left:644px;top:685.4px;font-size:13px;color:#333;width:90px;overflow:hidden;height:16px;line-height:14px">执行次数</div>
<div class="t " style="left:744px;top:685.4px;font-size:13px;color:#333;width:35px;overflow:hidden;height:16px;line-height:14px">最近一次</div>
<div class="t " style="left:784px;top:685.4px;font-size:13px;color:#333;width:110px;overflow:hidden;height:16px;line-height:14px">操作</div>
<div class="t " style="left:951px;top:685.4px;font-size:13px;color:#333;width:44px;overflow:hidden;height:16px;line-height:14px">首次执行</div>
<div class="a" style="left:90px;top:725px;width:907px;height:1px;background:#eaf4ec;"></div>
<div class="t " style="left:464px;top:710px;font-size:12px;color:#3aa655;">c</div>
<div class="t " style="left:608px;top:709.5px;font-size:12px;color:#3aa655;">启用</div>
<div class="t " style="left:645px;top:709px;font-size:13px;color:#000;">0</div>
<div class="t " style="left:758px;top:709px;font-size:12px;color:#777;">-</div>
<div class="a w" style="left:780px;top:706px;width:49px;height:18px;background:#2cac4e;font-size:12px;line-height:18px;text-align:center">修改</div>
<div class="a w" style="left:839px;top:706px;width:49px;height:18px;background:#ff8c00;font-size:12px;line-height:18px;text-align:center">禁用</div>
<div class="a w" style="left:898px;top:706px;width:49px;height:18px;background:#ff4500;font-size:12px;line-height:18px;text-align:center">删除</div>
<svg class="a" style="left:95px;top:710px;filter:blur(.6px)" width="90" height="10" viewBox="0 0 90 10"><rect x="0" y="0" width="5" height="5" fill="#a39ea9"/><rect x="5" y="0" width="5" height="5" fill="#9c97a3"/><rect x="10" y="0" width="5" height="5" fill="#d6d1d3"/><rect x="15" y="0" width="5" height="5" fill="#e3e2ea"/><rect x="20" y="0" width="5" height="5" fill="#c4bcc0"/><rect x="25" y="0" width="5" height="5" fill="#9c97a3"/><rect x="30" y="0" width="5" height="5" fill="#b1adb8"/><rect x="35" y="0" width="5" height="5" fill="#dfe8f3"/><rect x="40" y="0" width="5" height="5" fill="#9c97a3"/><rect x="45" y="0" width="5" height="5" fill="#b9b3bd"/><rect x="50" y="0" width="5" height="5" fill="#9c97a3"/><rect x="55" y="0" width="5" height="5" fill="#cfcad0"/><rect x="60" y="0" width="5" height="5" fill="#b1adb8"/><rect x="65" y="0" width="5" height="5" fill="#d9dfe9"/><rect x="70" y="0" width="5" height="5" fill="#d6d1d3"/><rect x="75" y="0" width="5" height="5" fill="#a39ea9"/><rect x="80" y="0" width="5" height="5" fill="#a39ea9"/><rect x="85" y="0" width="5" height="5" fill="#c9c2c4"/><rect x="0" y="5" width="5" height="5" fill="#b1adb8"/><rect x="5" y="5" width="5" height="5" fill="#d6d1d3"/><rect x="10" y="5" width="5" height="5" fill="#d6d1d3"/><rect x="15" y="5" width="5" height="5" fill="#b1adb8"/><rect x="20" y="5" width="5" height="5" fill="#ecebf1"/><rect x="25" y="5" width="5" height="5" fill="#dfe8f3"/><rect x="30" y="5" width="5" height="5" fill="#e3e2ea"/><rect x="35" y="5" width="5" height="5" fill="#a39ea9"/><rect x="40" y="5" width="5" height="5" fill="#dfe8f3"/><rect x="45" y="5" width="5" height="5" fill="#e3e2ea"/><rect x="50" y="5" width="5" height="5" fill="#d6d1d3"/><rect x="55" y="5" width="5" height="5" fill="#ecebf1"/><rect x="60" y="5" width="5" height="5" fill="#c9c2c4"/><rect x="65" y="5" width="5" height="5" fill="#cfcad0"/><rect x="70" y="5" width="5" height="5" fill="#dfe8f3"/><rect x="75" y="5" width="5" height="5" fill="#b9b3bd"/><rect x="80" y="5" width="5" height="5" fill="#e3e2ea"/><rect x="85" y="5" width="5" height="5" fill="#9c97a3"/></svg>
<svg class="a" style="left:215px;top:710px;filter:blur(.6px)" width="70" height="10" viewBox="0 0 70 10"><rect x="0" y="0" width="5" height="5" fill="#9c97a3"/><rect x="5" y="0" width="5" height="5" fill="#d9dfe9"/><rect x="10" y="0" width="5" height="5" fill="#c9c2c4"/><rect x="15" y="0" width="5" height="5" fill="#c4bcc0"/><rect x="20" y="0" width="5" height="5" fill="#c9c2c4"/><rect x="25" y="0" width="5" height="5" fill="#c9c2c4"/><rect x="30" y="0" width="5" height="5" fill="#dfe8f3"/><rect x="35" y="0" width="5" height="5" fill="#d6d1d3"/><rect x="40" y="0" width="5" height="5" fill="#cfcad0"/><rect x="45" y="0" width="5" height="5" fill="#b1adb8"/><rect x="50" y="0" width="5" height="5" fill="#a39ea9"/><rect x="55" y="0" width="5" height="5" fill="#dfe8f3"/><rect x="60" y="0" width="5" height="5" fill="#cfcad0"/><rect x="65" y="0" width="5" height="5" fill="#e3e2ea"/><rect x="0" y="5" width="5" height="5" fill="#b9b3bd"/><rect x="5" y="5" width="5" height="5" fill="#c4bcc0"/><rect x="10" y="5" width="5" height="5" fill="#b1adb8"/><rect x="15" y="5" width="5" height="5" fill="#a39ea9"/><rect x="20" y="5" width="5" height="5" fill="#ecebf1"/><rect x="25" y="5" width="5" height="5" fill="#d6d1d3"/><rect x="30" y="5" width="5" height="5" fill="#b9b3bd"/><rect x="35" y="5" width="5" height="5" fill="#9c97a3"/><rect x="40" y="5" width="5" height="5" fill="#a39ea9"/><rect x="45" y="5" width="5" height="5" fill="#cfcad0"/><rect x="50" y="5" width="5" height="5" fill="#c9c2c4"/><rect x="55" y="5" width="5" height="5" fill="#a39ea9"/><rect x="60" y="5" width="5" height="5" fill="#ecebf1"/><rect x="65" y="5" width="5" height="5" fill="#d9dfe9"/></svg>
<svg class="a" style="left:335px;top:710px;filter:blur(.6px)" width="70" height="10" viewBox="0 0 70 10"><rect x="0" y="0" width="5" height="5" fill="#a39ea9"/><rect x="5" y="0" width="5" height="5" fill="#c4bcc0"/><rect x="10" y="0" width="5" height="5" fill="#ecebf1"/><rect x="15" y="0" width="5" height="5" fill="#e3e2ea"/><rect x="20" y="0" width="5" height="5" fill="#a39ea9"/><rect x="25" y="0" width="5" height="5" fill="#c9c2c4"/><rect x="30" y="0" width="5" height="5" fill="#cfcad0"/><rect x="35" y="0" width="5" height="5" fill="#b9b3bd"/><rect x="40" y="0" width="5" height="5" fill="#e3e2ea"/><rect x="45" y="0" width="5" height="5" fill="#a39ea9"/><rect x="50" y="0" width="5" height="5" fill="#d6d1d3"/><rect x="55" y="0" width="5" height="5" fill="#a39ea9"/><rect x="60" y="0" width="5" height="5" fill="#ecebf1"/><rect x="65" y="0" width="5" height="5" fill="#dfe8f3"/><rect x="0" y="5" width="5" height="5" fill="#cfcad0"/><rect x="5" y="5" width="5" height="5" fill="#b1adb8"/><rect x="10" y="5" width="5" height="5" fill="#b1adb8"/><rect x="15" y="5" width="5" height="5" fill="#b1adb8"/><rect x="20" y="5" width="5" height="5" fill="#ecebf1"/><rect x="25" y="5" width="5" height="5" fill="#b1adb8"/><rect x="30" y="5" width="5" height="5" fill="#9c97a3"/><rect x="35" y="5" width="5" height="5" fill="#a39ea9"/><rect x="40" y="5" width="5" height="5" fill="#ecebf1"/><rect x="45" y="5" width="5" height="5" fill="#b9b3bd"/><rect x="50" y="5" width="5" height="5" fill="#b1adb8"/><rect x="55" y="5" width="5" height="5" fill="#a39ea9"/><rect x="60" y="5" width="5" height="5" fill="#cfcad0"/><rect x="65" y="5" width="5" height="5" fill="#c9c2c4"/></svg>
<div class="a" style="left:1px;top:733px;width:998px;height:31px;background:#2cac4e;"></div>
<div class="a" style="left:1px;top:733px;width:998px;height:1px;background:#1f9a40;"></div>
<div class="a" style="left:1px;top:733px;width:151px;height:31px;background:#008000;"></div>
<div class="t " style="left:14px;top:742px;font-size:14px;color:#fff;">IIS7服务器管理</div>
<div class="t " style="left:121px;top:742.5px;font-size:13px;color:#fff;letter-spacing:-.9px">FTP</div>
<div class="a" style="left:152px;top:734px;width:28px;height:30px;background:#5dbb76;"></div>
<div class="t " style="left:164px;top:743px;font-size:12px;color:#fff;">1</div>
<div class="a" style="left:180px;top:734px;width:82px;height:28px;background:#e6fbea;"></div>
<div class="t " style="left:187.3px;top:743.3px;font-size:12.5px;color:#ff0000;font-weight:bold">【默认】</div>
<svg class="a" style="left:248px;top:742px" width="13" height="13" viewBox="0 0 13 13"><circle cx="6.5" cy="6.5" r="6" fill="#6a74c8"/><path d="M4 4 L9 9 M9 4 L4 9" stroke="#fff" stroke-width="1.3" fill="none"/></svg>
<div class="a" style="left:911px;top:750px;width:10px;height:4px;background:#d9f2df;"></div>
<div class="a" style="left:944px;top:744px;width:10px;height:10px;border:1px solid #d9f2df;border-top-width:3px"></div>
<svg class="a" style="left:977px;top:743px" width="12" height="12" viewBox="0 0 12 12"><path d="M1.5 1.5 L10.5 10.5 M10.5 1.5 L1.5 10.5" stroke="#d9f2df" stroke-width="2.2" fill="none"/></svg>
<div class="a" style="left:1px;top:733px;width:1px;height:169px;background:#008000;"></div>
<div class="a" style="left:2px;top:764px;width:499px;height:25px;background:#5dbb76;"></div>
<div class="a" style="left:162px;top:763px;width:264px;height:26px;background:#dff2e3;"></div>
<div class="t " style="left:10px;top:771px;font-size:12px;color:#fff;">本地</div>
<svg class="a" style="left:57px;top:771px" width="11" height="12" viewBox="0 0 11 12" fill="none" stroke="#46905d" stroke-width="1.35"><path d="M10 5.5 H1.5 M5 2 L1.5 5.5 L5 9"/></svg>
<svg class="a" style="left:97px;top:771px" width="11" height="12" viewBox="0 0 11 12" fill="none" stroke="#46905d" stroke-width="1.35"><path d="M1 5.5 H9.5 M6 2 L9.5 5.5 L6 9"/></svg>
<svg class="a" style="left:137px;top:770px" width="11" height="12" viewBox="0 0 11 12" fill="none" stroke="#d4f1db" stroke-width="1.35"><path d="M5.5 10.5 V1.5 M2 5 L5.5 1.5 L9 5"/></svg>
<div class="t " style="left:168px;top:771.5px;font-size:12.1px;color:#111;">F:\IIS7服务器管理_2.1.9A6\</div>
<svg class="a" style="left:441.5px;top:771.5px" width="10" height="10" viewBox="0 0 11 11" fill="none" stroke="#fff" stroke-width="1.3"><path d="M9.5 1.5 L1.5 9.5 M1.5 3.5 V9.5 H7.5"/></svg>
<svg class="a" style="left:478.5px;top:771px" width="10" height="10" viewBox="0 0 11 11" fill="none" stroke="#fff" stroke-width="1.3"><path d="M1.5 9.5 L9.5 1.5 M3.5 1.5 H9.5 V7.5"/></svg>
<div class="a" style="left:501px;top:763px;width:4px;height:139px;background:#5dbb76;"></div>
<div class="a" style="left:507px;top:764px;width:160px;height:25px;background:#5dbb76;"></div>
<div class="a" style="left:667px;top:763px;width:332px;height:26px;background:#dff2e3;"></div>
<div class="t " style="left:515px;top:771px;font-size:12px;color:#fff;">远端</div>
<svg class="a" style="left:562px;top:771px" width="11" height="12" viewBox="0 0 11 12" fill="none" stroke="#46905d" stroke-width="1.35"><path d="M10 5.5 H1.5 M5 2 L1.5 5.5 L5 9"/></svg>
<svg class="a" style="left:602px;top:771px" width="11" height="12" viewBox="0 0 11 12" fill="none" stroke="#46905d" stroke-width="1.35"><path d="M1 5.5 H9.5 M6 2 L9.5 5.5 L6 9"/></svg>
<svg class="a" style="left:642px;top:770px" width="11" height="12" viewBox="0 0 11 12" fill="none" stroke="#46905d" stroke-width="1.35"><path d="M5.5 10.5 V1.5 M2 5 L5.5 1.5 L9 5"/></svg>
<div class="t " style="left:673px;top:771px;font-size:13px;color:#111;">/</div>
<div class="a" style="left:2px;top:789px;width:499px;height:24px;background:#f9e0c7;"></div>
<div class="a" style="left:507px;top:789px;width:492px;height:24px;background:#f9e0c7;"></div>
<div class="a" style="left:41px;top:789px;width:1px;height:24px;background:linear-gradient(#2cac4e,#8fd4a0 45%,#fff);"></div>
<div class="a" style="left:161px;top:789px;width:1px;height:24px;background:linear-gradient(#2cac4e,#8fd4a0 45%,#fff);"></div>
<div class="a" style="left:281px;top:789px;width:1px;height:24px;background:linear-gradient(#2cac4e,#8fd4a0 45%,#fff);"></div>
<div class="a" style="left:361px;top:789px;width:1px;height:24px;background:linear-gradient(#2cac4e,#8fd4a0 45%,#fff);"></div>
<div class="a" style="left:441px;top:789px;width:1px;height:24px;background:linear-gradient(#2cac4e,#8fd4a0 45%,#fff);"></div>
<div class="a" style="left:546px;top:789px;width:1px;height:24px;background:linear-gradient(#2cac4e,#8fd4a0 45%,#fff);"></div>
<div class="a" style="left:666px;top:789px;width:1px;height:24px;background:linear-gradient(#2cac4e,#8fd4a0 45%,#fff);"></div>
<div class="a" style="left:786px;top:789px;width:1px;height:24px;background:linear-gradient(#2cac4e,#8fd4a0 45%,#fff);"></div>
<div class="a" style="left:866px;top:789px;width:1px;height:24px;background:linear-gradient(#2cac4e,#8fd4a0 45%,#fff);"></div>
<div class="a" style="left:946px;top:789px;width:1px;height:24px;background:linear-gradient(#2cac4e,#8fd4a0 45%,#fff);"></div>
<div class="t " style="left:46px;top:795px;font-size:13px;color:#333;width:100px;overflow:hidden;height:16px;line-height:14px">文件名</div>
<div class="t " style="left:166px;top:795px;font-size:13px;color:#333;width:100px;overflow:hidden;height:16px;line-height:14px">类型</div>
<div class="t " style="left:286px;top:795px;font-size:13px;color:#333;width:70px;overflow:hidden;height:16px;line-height:14px">文件大小</div>
<div class="t " style="left:366px;top:795px;font-size:13px;color:#333;width:70px;overflow:hidden;height:16px;line-height:14px">文件数量</div>
<div class="t " style="left:446px;top:795px;font-size:13px;color:#333;width:55px;overflow:hidden;height:16px;line-height:14px">文件夹数量</div>
<div class="t " style="left:551px;top:795px;font-size:13px;color:#333;width:100px;overflow:hidden;height:16px;line-height:14px">文件名</div>
<div class="t " style="left:671px;top:795px;font-size:13px;color:#333;width:100px;overflow:hidden;height:16px;line-height:14px">类型</div>
<div class="t " style="left:791px;top:795px;font-size:13px;color:#333;width:70px;overflow:hidden;height:16px;line-height:14px">文件大小</div>
<div class="t " style="left:871px;top:795px;font-size:13px;color:#333;width:70px;overflow:hidden;height:16px;line-height:14px">文件数量</div>
<div class="t " style="left:951px;top:795px;font-size:13px;color:#333;width:48px;overflow:hidden;height:16px;line-height:14px">文件夹数量</div>
<div class="a" style="left:2px;top:834px;width:498px;height:1px;background:#f1f1f1;"></div>
<div class="a" style="left:2px;top:857px;width:498px;height:1px;background:#f1f1f1;"></div>
<div class="a" style="left:2px;top:879px;width:498px;height:1px;background:#f1f1f1;"></div>
<div class="a" style="left:507px;top:834px;width:492px;height:1px;background:#f1f1f1;"></div>
<svg class="a" style="left:13px;top:814px" width="20" height="20" viewBox="0 0 20 20"><defs><linearGradient id="fa13_814" x1="0" x2="1" y1="0" y2="1"><stop offset="0" stop-color="#ead98a"/><stop offset=".6" stop-color="#e3cc62"/><stop offset="1" stop-color="#e6c640"/></linearGradient><linearGradient id="fb13_814" x1="0" x2="1"><stop offset="0" stop-color="#f6e79a"/><stop offset=".55" stop-color="#fbf0ac"/><stop offset="1" stop-color="#e2c965"/></linearGradient><filter id="fs13_814"><feGaussianBlur stdDeviation="1"/></filter></defs><path d="M13 12 L18.5 13.5 L14 17.5Z" fill="#777" opacity=".55" filter="url(#fs13_814)"/><path d="M2.8 .2 L12.8 1.2 L13 16.8 L5.2 17.6 L5.2 2.8Z" fill="url(#fa13_814)"/><path d="M4.2 3.2 H5.2 V12 H4.2Z" fill="#fff"/><path d="M.2 .2 L4.8 2.8 L4.8 17.6 L3.6 19 L.2 14.6Z" fill="url(#fb13_814)"/><path d="M12 12 H13 V15 H12Z" fill="#fff"/><path d="M12 15 H13 V16.2 H12Z" fill="#5b9bd5"/></svg>
<div class="t " style="left:46px;top:818.0px;font-size:12.7px;color:#111;">BackupData</div>
<div class="t " style="left:166px;top:817.5px;font-size:12px;color:#111;">文件夹</div>
<div class="t " style="left:320px;top:817.5px;font-size:12px;color:#666;">-</div>
<div class="t " style="left:400px;top:817.5px;font-size:12px;color:#666;">-</div>
<div class="t " style="left:480px;top:817.5px;font-size:12px;color:#666;">-</div>
<svg class="a" style="left:13px;top:836px" width="20" height="20" viewBox="0 0 20 20"><defs><linearGradient id="fa13_836" x1="0" x2="1" y1="0" y2="1"><stop offset="0" stop-color="#ead98a"/><stop offset=".6" stop-color="#e3cc62"/><stop offset="1" stop-color="#e6c640"/></linearGradient><linearGradient id="fb13_836" x1="0" x2="1"><stop offset="0" stop-color="#f6e79a"/><stop offset=".55" stop-color="#fbf0ac"/><stop offset="1" stop-color="#e2c965"/></linearGradient><filter id="fs13_836"><feGaussianBlur stdDeviation="1"/></filter></defs><path d="M13 12 L18.5 13.5 L14 17.5Z" fill="#777" opacity=".55" filter="url(#fs13_836)"/><path d="M2.8 .2 L12.8 1.2 L13 16.8 L5.2 17.6 L5.2 2.8Z" fill="url(#fa13_836)"/><path d="M4.2 3.2 H5.2 V12 H4.2Z" fill="#fff"/><path d="M.2 .2 L4.8 2.8 L4.8 17.6 L3.6 19 L.2 14.6Z" fill="url(#fb13_836)"/><path d="M12 12 H13 V15 H12Z" fill="#fff"/><path d="M12 15 H13 V16.2 H12Z" fill="#5b9bd5"/></svg>
<div class="t " style="left:46px;top:840.5px;font-size:12.7px;color:#111;">Data</div>
<div class="t " style="left:166px;top:840px;font-size:12px;color:#111;">文件夹</div>
<div class="t " style="left:320px;top:840px;font-size:12px;color:#666;">-</div>
<div class="t " style="left:400px;top:840px;font-size:12px;color:#666;">-</div>
<div class="t " style="left:480px;top:840px;font-size:12px;color:#666;">-</div>
<svg class="a" style="left:13px;top:859px" width="20" height="20" viewBox="0 0 20 20"><defs><linearGradient id="fa13_859" x1="0" x2="1" y1="0" y2="1"><stop offset="0" stop-color="#ead98a"/><stop offset=".6" stop-color="#e3cc62"/><stop offset="1" stop-color="#e6c640"/></linearGradient><linearGradient id="fb13_859" x1="0" x2="1"><stop offset="0" stop-color="#f6e79a"/><stop offset=".55" stop-color="#fbf0ac"/><stop offset="1" stop-color="#e2c965"/></linearGradient><filter id="fs13_859"><feGaussianBlur stdDeviation="1"/></filter></defs><path d="M13 12 L18.5 13.5 L14 17.5Z" fill="#777" opacity=".55" filter="url(#fs13_859)"/><path d="M2.8 .2 L12.8 1.2 L13 16.8 L5.2 17.6 L5.2 2.8Z" fill="url(#fa13_859)"/><path d="M4.2 3.2 H5.2 V12 H4.2Z" fill="#fff"/><path d="M.2 .2 L4.8 2.8 L4.8 17.6 L3.6 19 L.2 14.6Z" fill="url(#fb13_859)"/><path d="M12 12 H13 V15 H12Z" fill="#fff"/><path d="M12 15 H13 V16.2 H12Z" fill="#5b9bd5"/></svg>
<div class="t " style="left:46px;top:863.0px;font-size:12.7px;color:#111;">logs</div>
<div class="t " style="left:166px;top:862.5px;font-size:12px;color:#111;">文件夹</div>
<div class="t " style="left:320px;top:862.5px;font-size:12px;color:#666;">-</div>
<div class="t " style="left:400px;top:862.5px;font-size:12px;color:#666;">-</div>
<div class="t " style="left:480px;top:862.5px;font-size:12px;color:#666;">-</div>
<svg class="a" style="left:15px;top:881px" width="16" height="20" viewBox="0 0 16 20" fill="none" stroke="#333" stroke-width="1.2" stroke-linejoin="round"><path d="M2 1 H10 L14.5 5.5 V18 Q14.5 19 13.5 19 H2 Q1 19 1 18 V2 Q1 1 2 1Z" fill="#fff"/><path d="M10 1 V5.5 H14.5" /><path d="M4 9.5 H11.5 M4 12.5 H11.5 M4 15.5 H11.5" stroke="#666" stroke-width="1.3"/></svg>
<div class="t " style="left:46px;top:885.5px;font-size:12px;color:#111;">IIS7服务器管理.exe</div>
<div class="t " style="left:166px;top:885px;font-size:13px;color:#111;">.exe</div>
<div class="t " style="left:320px;top:885px;font-size:12px;color:#666;">-</div>
<div class="t " style="left:400px;top:885px;font-size:12px;color:#666;">-</div>
<div class="t " style="left:480px;top:885px;font-size:12px;color:#666;">-</div>
<div class="a" style="left:282px;top:836px;width:80px;height:22px;border:1px dotted #555"></div>
<svg class="a" style="left:519px;top:814px" width="16" height="20" viewBox="0 0 16 20" fill="none" stroke="#333" stroke-width="1.2" stroke-linejoin="round"><path d="M2 1 H10 L14.5 5.5 V18 Q14.5 19 13.5 19 H2 Q1 19 1 18 V2 Q1 1 2 1Z" fill="#fff"/><path d="M10 1 V5.5 H14.5" /><path d="M4 9.5 H11.5 M4 12.5 H11.5 M4 15.5 H11.5" stroke="#666" stroke-width="1.3"/></svg>
<div class="t " style="left:551px;top:818px;font-size:12px;color:#111;">IIS7服务器管理.exe</div>
<div class="t " style="left:671px;top:817px;font-size:13px;color:#111;">.exe</div>
<div class="t " style="left:813px;top:817px;font-size:13px;color:#111;">2 MB</div>
<div class="t " style="left:903px;top:817px;font-size:13px;color:#111;">1</div>
<div class="t " style="left:983px;top:817px;font-size:13px;color:#111;">0</div>
<div class="a" style="left:0px;top:902px;width:999px;height:1px;background:#3c4b5c;"></div>
<div class="a" style="left:0px;top:903px;width:999px;height:2px;background:#b9d1ea;"></div>
</body></html>
